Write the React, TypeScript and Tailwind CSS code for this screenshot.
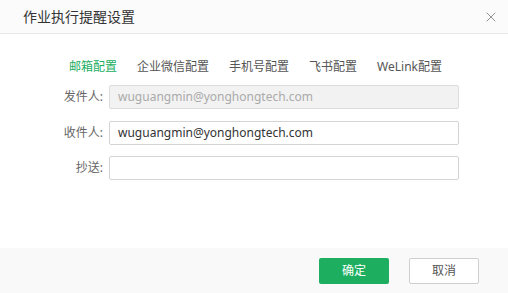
import { X } from 'lucide-react';

const tabs = ['邮箱配置', '企业微信配置', '手机号配置', '飞书配置', 'WeLink配置'];

const fields = [
  { label: '发件人:', value: 'wuguangmin@yonghongtech.com', disabled: true, mt: 'mt-[9px]' },
  { label: '收件人:', value: 'wuguangmin@yonghongtech.com', disabled: false, mt: 'mt-[12px]' },
  { label: '抄送:', value: '', disabled: false, mt: 'mt-[11px]' },
];

export default function App() {
  return (
    <div
      className="w-[508px] h-[293px] bg-white flex flex-col text-[#333]"
      style={{ fontFamily: '"Noto Sans", "Noto Sans CJK SC", sans-serif' }}
    >
      <div className="h-[34px] shrink-0 flex items-center justify-between pl-[23px] pr-[9px] bg-[#fbfbfb] border-b border-[#e8e8e8]">
        <span className="text-[14px] text-[#333]">作业执行提醒设置</span>
        <X size={16} strokeWidth={1.2} className="text-[#777]" />
      </div>

      <div className="flex-1">
        <div className="flex gap-[20px] pl-[69px] mt-[24px] text-[12px] leading-[18px]">
          {tabs.map((t, i) => (
            <span key={t} className={i === 0 ? 'text-[#1aae5f]' : 'text-[#555]'}>
              {t}
            </span>
          ))}
        </div>

        {fields.map((f) => (
          <div key={f.label} className={`flex items-center ${f.mt}`}>
            <span className="w-[103px] text-right text-[12px] text-[#666]">{f.label}</span>
            <div
              className={`ml-[6px] w-[350px] h-[24px] border rounded-[2px] flex items-center px-[8px] text-[12px] ${
                f.disabled ? 'bg-[#f2f2f2] border-[#dcdcdc] text-[#aaa]' : 'bg-white border-[#d4d4d4] text-[#333]'
              }`}
            >
              {f.value}
            </div>
          </div>
        ))}
      </div>

      <div className="h-[45px] shrink-0 bg-[#f9f9f9] flex items-center justify-end gap-[20px] pr-[29px]">
        <button className="w-[70px] h-[26px] rounded-[2px] bg-[#1daf5f] text-white text-[12px]">确定</button>
        <button className="w-[70px] h-[26px] rounded-[2px] bg-white border border-[#cfcfcf] text-[#555] text-[12px]">
          取消
        </button>
      </div>
    </div>
  );
}
